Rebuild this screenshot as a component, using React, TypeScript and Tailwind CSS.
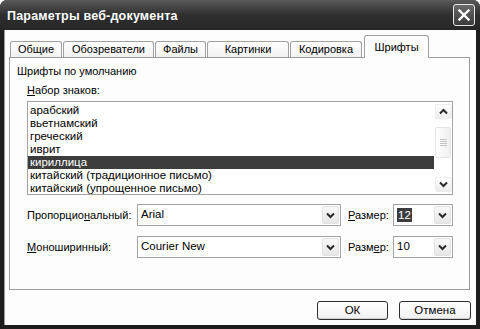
import React from "react";

const font = { fontFamily: '"Liberation Sans", Arial, sans-serif' };

const tabs = [
  { label: "Общие", w: "w-[52px]" },
  { label: "Обозреватели", w: "w-[91px]" },
  { label: "Файлы", w: "w-[51px]" },
  { label: "Картинки", w: "w-[82px]" },
  { label: "Кодировка", w: "w-[72px]" },
];

const charsets = [
  "арабский",
  "вьетнамский",
  "греческий",
  "иврит",
  "кириллица",
  "китайский (традиционное письмо)",
  "китайский (упрощенное письмо)",
];

function Chevron({ up = false }: { up?: boolean }) {
  return (
    <svg width="9" height="7" viewBox="0 0 9 7">
      <polyline
        points={up ? "1,5.5 4.5,2 8,5.5" : "1,1.5 4.5,5 8,1.5"}
        fill="none"
        stroke="#2a2a2a"
        strokeWidth="2"
      />
    </svg>
  );
}

function ArrowButton() {
  return (
    <div className="flex h-full w-[17px] items-center justify-center rounded-[2px] border border-[#e2e2e2] bg-gradient-to-b from-[#fafafa] to-[#e6e6e6]">
      <Chevron />
    </div>
  );
}

function Combo({ width, children }: { width: string; children: React.ReactNode }) {
  return (
    <div className={`flex h-[22px] items-center border border-[#a3a3a3] bg-white p-px ${width}`}>
      <div className="flex flex-1 items-center pl-[2px] text-[11.5px] text-black">{children}</div>
      <ArrowButton />
    </div>
  );
}

export default function App() {
  return (
    <div className="h-[329px] w-[480px] overflow-hidden bg-white" style={font}>
      <div className="flex h-full flex-col rounded-t-[7px] bg-[#1e1e1e]">
        {/* title bar */}
        <div className="flex h-[30px] items-center justify-between rounded-t-[7px] bg-gradient-to-b from-[#5a5a5a] via-[#2f2f2f] to-[#262626] pl-[7px] pr-[5px]">
          <span className="pt-[3px] text-[12.5px] font-bold tracking-[0.2px] text-white">Параметры веб-документа</span>
          <div className="flex h-[22px] w-[22px] items-center justify-center rounded-[3px] border border-[#e8e8e8] bg-gradient-to-b from-[#6a6a6a] to-[#3a3a3a]">
            <svg width="12" height="12" viewBox="0 0 12 12">
              <path d="M1.5 1.5 L10.5 10.5 M10.5 1.5 L1.5 10.5" stroke="#fff" strokeWidth="2.4" strokeLinecap="square" />
            </svg>
          </div>
        </div>

        {/* body */}
        <div className="mx-[4px] mb-[4px] flex flex-1 flex-col border-l border-[#9a9a9a] bg-[#fdfdfd] pl-[4px] pr-[5px] text-[11px]">
          <div className="flex h-[27px] items-end pl-px">
            {tabs.map((t) => (
              <div
                key={t.label}
                className={`mr-px flex h-[16px] items-center justify-center rounded-t-[3px] border border-b-0 border-[#a0a0a0] bg-gradient-to-b from-white to-[#f2f2f2] text-black ${t.w}`}
              >
                {t.label}
              </div>
            ))}
            <div className="relative z-10 -mb-px ml-px flex h-[23px] w-[65px] items-start justify-center rounded-t-[3px] border border-b-0 border-[#a0a0a0] bg-[#fdfdfd] pt-[3px] text-black">
              Шрифты
            </div>
          </div>

          <div className="flex h-[233px] w-[461px] flex-col border border-[#9a9a9a] bg-[#fdfdfd] pl-[7px] pt-[6px] text-black">
            <div className="leading-[14px]">Шрифты по умолчанию</div>
            <div className="ml-[10px] mt-[5px] leading-[14px]">
              <span className="underline">Н</span>абор знаков:
            </div>

            <div className="ml-[10px] mt-[4px] flex h-[94px] w-[426px] border border-[#a3a3a3] bg-white text-[11.5px]">
              <div className="flex flex-1 flex-col pt-[2px]">
                {charsets.map((c) => (
                  <div
                    key={c}
                    className={`h-[13px] pl-[2px] leading-[13px] ${c === "кириллица" ? "bg-[#3c3c3c] text-white" : "text-black"}`}
                  >
                    {c}
                  </div>
                ))}
              </div>
              <div className="flex w-[18px] flex-col items-center py-[2px]">
                <div className="flex h-[15px] w-[17px] items-center justify-center rounded-[2px] border border-[#ececec] bg-gradient-to-b from-white to-[#ececec]">
                  <Chevron up />
                </div>
                <div className="mt-[8px] flex h-[31px] w-[16px] flex-col items-center justify-center gap-px rounded-[2px] border border-[#e4e4e4] bg-gradient-to-r from-white to-[#f0f0f0]">
                  <div className="h-px w-[7px] bg-[#c4c4c4]" />
                  <div className="h-px w-[7px] bg-[#c4c4c4]" />
                  <div className="h-px w-[7px] bg-[#c4c4c4]" />
                  <div className="h-px w-[7px] bg-[#c4c4c4]" />
                </div>
                <div className="flex-1" />
                <div className="flex h-[15px] w-[17px] items-center justify-center rounded-[2px] border border-[#ececec] bg-gradient-to-b from-white to-[#ececec]">
                  <Chevron />
                </div>
              </div>
            </div>

            <div className="ml-[10px] mt-[9px] flex items-center">
              <div className="w-[110px] whitespace-nowrap">
                Пропорцио<span className="underline">н</span>альный:
              </div>
              <Combo width="w-[204px]">Arial</Combo>
              <div className="ml-[7px] w-[45px]">
                <span className="underline">Р</span>азмер:
              </div>
              <Combo width="w-[60px]">
                <span className="bg-[#3c3c3c] px-px leading-[14px] text-white">12</span>
              </Combo>
            </div>

            <div className="ml-[10px] mt-[10px] flex items-center">
              <div className="w-[110px]">
                <span className="underline">М</span>оноширинный:
              </div>
              <Combo width="w-[204px]">Courier New</Combo>
              <div className="ml-[7px] w-[45px]">
                Разм<span className="underline">е</span>р:
              </div>
              <Combo width="w-[60px]">10</Combo>
            </div>
          </div>

          <div className="mt-[11px] flex justify-end gap-[11px] pr-0">
            <button className="h-[19px] w-[71px] rounded-[3px] border border-[#2e2e2e] bg-gradient-to-b from-white to-[#f0f0f0] text-[11.5px] leading-none text-black shadow-[inset_0_-1px_0_#d0d0d0]">
              ОК
            </button>
            <button className="h-[19px] w-[72px] rounded-[3px] border border-[#2e2e2e] bg-gradient-to-b from-white to-[#f0f0f0] text-[11.5px] leading-none text-black shadow-[inset_0_-1px_0_#d0d0d0]">
              Отмена
            </button>
          </div>
        </div>
      </div>
    </div>
  );
}
